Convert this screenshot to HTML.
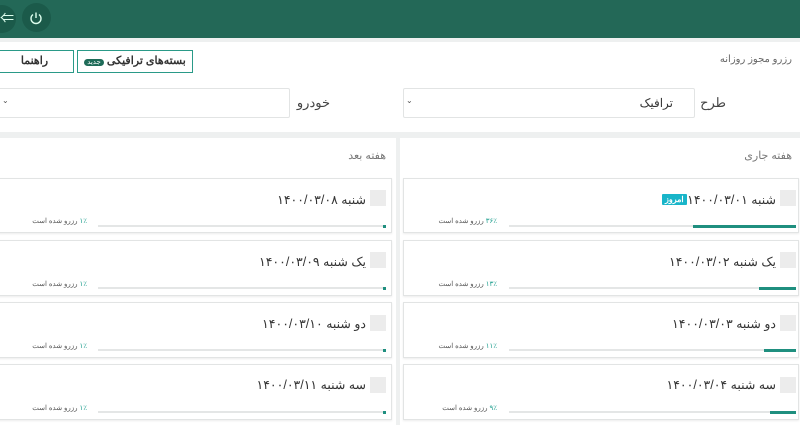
<!DOCTYPE html>
<html><head><meta charset="utf-8"><style>
*{margin:0;padding:0;box-sizing:border-box}
body{width:800px;height:425px;overflow:hidden;background:#eef0f0;font-family:"Liberation Sans","Noto Sans CJK SC",sans-serif;position:relative;color:#333}
.a{position:absolute}
.hdr{left:0;top:0;width:800px;height:38px;background:#236857}
.circ{width:28px;height:28px;border-radius:50%;background:#1b5a4a}
.panel{background:#fff}
.card{background:#fff;border:1px solid #e2e4e4;box-shadow:0 1px 2px rgba(0,0,0,.08)}
.cb{width:16px;height:16px;background:#ececec}
.t{font-size:12.5px;color:#333;direction:rtl;white-space:nowrap}
.bar{height:2px;background:#e4e6e6}
.fill{height:3px;background:#1f8f7f}
.p{font-size:7px;color:#555;direction:rtl;white-space:nowrap}
.p b{color:#1f9f8f;font-weight:normal}
.sel{background:#fff;border:1px solid #e2e4e4;border-radius:2px}
.lbl{font-size:13px;color:#444;direction:rtl}
</style></head><body>
<div class="a hdr"></div>
<div class="a circ" style="left:-12px;top:5px"></div>
<div class="a" style="left:0;top:10px;color:#dfe;font-size:14px;line-height:16px">⇐</div>
<div class="a circ" style="left:22px;top:3px;width:29px;height:29px"></div>
<svg class="a" style="left:28px;top:10px" width="16" height="16" viewBox="0 0 16 16"><path d="M5 4.5A5 5 0 1 0 11 4.5" fill="none" stroke="#dfe" stroke-width="1.4"/><path d="M8 2.5V8" stroke="#dfe" stroke-width="1.4"/></svg>

<div class="a panel" style="left:0;top:42px;width:800px;height:90px"></div>
<div class="a lbl" style="right:8px;top:54px;font-size:10px;color:#666">رزرو مجوز روزانه</div>
<div class="a" style="left:77px;top:50px;width:116px;height:23px;border:1px solid #2a9a88;font-size:11px;font-weight:bold;direction:rtl;text-align:center;line-height:20px;color:#333">بسته‌های ترافیکی <span style="background:#1e6b58;color:#fff;font-size:7px;font-weight:normal;border-radius:6px;padding:0 3px">جدید</span></div>
<div class="a" style="left:-5px;top:50px;width:79px;height:23px;border:1px solid #2a9a88;font-size:11px;font-weight:bold;text-align:center;line-height:20px;color:#333">راهنما</div>
<div class="a sel" style="left:403px;top:88px;width:292px;height:30px"></div>
<div class="a t" style="right:127px;top:96px;font-size:12px">ترافیک</div>
<div class="a" style="left:406px;top:96px;font-size:8px;color:#555">⌄</div>
<div class="a lbl" style="right:74px;top:95px">طرح</div>
<div class="a sel" style="left:-5px;top:88px;width:295px;height:30px"></div>
<div class="a" style="left:2px;top:96px;font-size:8px;color:#555">⌄</div>
<div class="a lbl" style="right:470px;top:95px">خودرو</div>

<div class="a panel" style="left:400px;top:138px;width:400px;height:287px"></div>
<div class="a panel" style="left:0;top:138px;width:396px;height:287px"></div>
<div class="a lbl" style="right:8px;top:149px;font-size:11px;color:#777">هفته جاری</div>
<div class="a lbl" style="right:414px;top:149px;font-size:11px;color:#777">هفته بعد</div>

<!-- right column -->
<div class="a card" style="left:403px;top:178px;width:396px;height:55px"></div>
<div class="a cb" style="left:780px;top:190px"></div>
<div class="a t" style="right:24px;top:192px">شنبه ۱۴۰۰/۰۳/۰۱</div>
<div class="a" style="left:662px;top:194px;background:#19b5c9;color:#fff;font-size:8px;font-weight:bold;padding:0 3px;line-height:11px;border-radius:1px">امروز</div>
<div class="a bar" style="left:509px;top:225px;width:287px"></div>
<div class="a fill" style="left:693px;top:225px;width:103px"></div>
<div class="a p" style="right:303px;top:217px"><b>۳۶٪</b> رزرو شده است</div>

<div class="a card" style="left:403px;top:240px;width:396px;height:56px"></div>
<div class="a cb" style="left:780px;top:252px"></div>
<div class="a t" style="right:24px;top:254px">یک شنبه ۱۴۰۰/۰۳/۰۲</div>
<div class="a bar" style="left:509px;top:287px;width:287px"></div>
<div class="a fill" style="left:759px;top:287px;width:37px"></div>
<div class="a p" style="right:303px;top:280px"><b>۱۳٪</b> رزرو شده است</div>

<div class="a card" style="left:403px;top:302px;width:396px;height:56px"></div>
<div class="a cb" style="left:780px;top:315px"></div>
<div class="a t" style="right:24px;top:316px">دو شنبه ۱۴۰۰/۰۳/۰۳</div>
<div class="a bar" style="left:509px;top:349px;width:287px"></div>
<div class="a fill" style="left:764px;top:349px;width:32px"></div>
<div class="a p" style="right:303px;top:342px"><b>۱۱٪</b> رزرو شده است</div>

<div class="a card" style="left:403px;top:364px;width:396px;height:56px"></div>
<div class="a cb" style="left:780px;top:377px"></div>
<div class="a t" style="right:24px;top:377px">سه شنبه ۱۴۰۰/۰۳/۰۴</div>
<div class="a bar" style="left:509px;top:411px;width:287px"></div>
<div class="a fill" style="left:770px;top:411px;width:26px"></div>
<div class="a p" style="right:303px;top:404px"><b>۹٪</b> رزرو شده است</div>

<!-- left column -->
<div class="a card" style="left:-4px;top:178px;width:396px;height:55px"></div>
<div class="a cb" style="left:370px;top:190px"></div>
<div class="a t" style="right:434px;top:192px">شنبه ۱۴۰۰/۰۳/۰۸</div>
<div class="a bar" style="left:98px;top:225px;width:287px"></div>
<div class="a fill" style="left:383px;top:225px;width:3px"></div>
<div class="a p" style="right:713px;top:217px"><b>۱٪</b> رزرو شده است</div>

<div class="a card" style="left:-4px;top:240px;width:396px;height:56px"></div>
<div class="a cb" style="left:370px;top:252px"></div>
<div class="a t" style="right:434px;top:254px">یک شنبه ۱۴۰۰/۰۳/۰۹</div>
<div class="a bar" style="left:98px;top:287px;width:287px"></div>
<div class="a fill" style="left:383px;top:287px;width:3px"></div>
<div class="a p" style="right:713px;top:280px"><b>۱٪</b> رزرو شده است</div>

<div class="a card" style="left:-4px;top:302px;width:396px;height:56px"></div>
<div class="a cb" style="left:370px;top:315px"></div>
<div class="a t" style="right:434px;top:316px">دو شنبه ۱۴۰۰/۰۳/۱۰</div>
<div class="a bar" style="left:98px;top:349px;width:287px"></div>
<div class="a fill" style="left:383px;top:349px;width:3px"></div>
<div class="a p" style="right:713px;top:342px"><b>۱٪</b> رزرو شده است</div>

<div class="a card" style="left:-4px;top:364px;width:396px;height:56px"></div>
<div class="a cb" style="left:370px;top:377px"></div>
<div class="a t" style="right:434px;top:377px">سه شنبه ۱۴۰۰/۰۳/۱۱</div>
<div class="a bar" style="left:98px;top:411px;width:287px"></div>
<div class="a fill" style="left:383px;top:411px;width:3px"></div>
<div class="a p" style="right:713px;top:404px"><b>۱٪</b> رزرو شده است</div>
</body></html>
